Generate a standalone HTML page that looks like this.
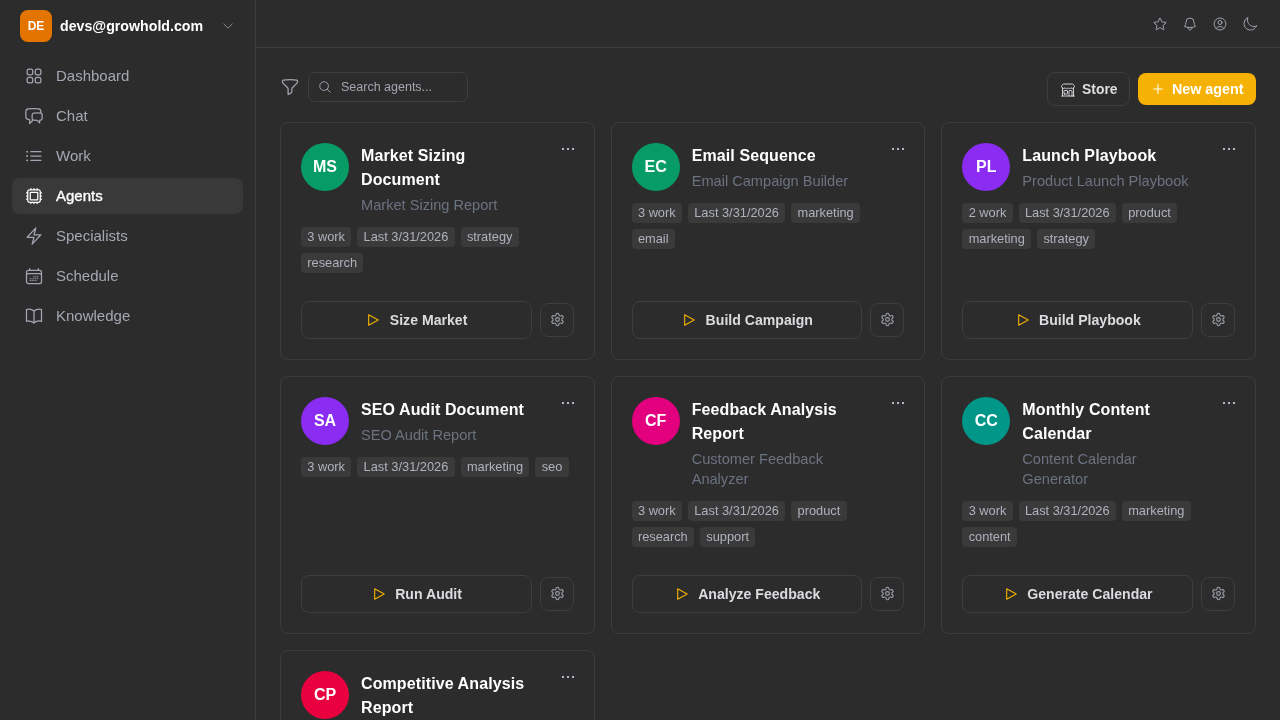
<!DOCTYPE html>
<html><head><meta charset="utf-8">
<style>
*{box-sizing:border-box;margin:0;padding:0}
body{will-change:transform}
html,body{width:1280px;height:720px;overflow:hidden;background:#2c2c2c;font-family:"Liberation Sans",sans-serif;color:#fff}
svg{display:block}
.sb{position:absolute;left:0;top:0;width:256px;height:720px;border-right:1px solid #3e3e3e;background:#2c2c2c}
.hdr{position:absolute;left:256px;top:0;right:0;height:48px;border-bottom:1px solid #3e3e3e}
.av{position:absolute;left:20px;top:10px;width:32px;height:32px;border-radius:8px;background:#e37400;font-weight:700;font-size:12px;line-height:32px;text-align:center;color:#fff}
.email{position:absolute;left:60px;top:16px;font-size:14.2px;font-weight:700;line-height:20px;color:#fff;white-space:nowrap}
.chev{position:absolute;left:221px;top:19px}
.item{position:absolute;left:12px;width:231px;height:36px;border-radius:8px;font-size:15px;line-height:36px;color:#a4a8b4}
.item svg{position:absolute;left:12px;top:8px}
.item span{position:absolute;left:44px;top:0}
.item.act{background:#393939;color:#fff;-webkit-text-stroke:0.35px #fff}
.hi{position:absolute;top:16px}
.filter{position:absolute;left:280px;top:77px}
.search{position:absolute;left:308px;top:72px;width:160px;height:30px;border:1px solid #3e3e3e;border-radius:7px}
.search svg{position:absolute;left:9px;top:7px}
.search span{position:absolute;left:32px;top:0;line-height:28px;font-size:12.5px;color:#a3a6b0}
.store{position:absolute;left:1047px;top:72px;width:83px;height:34px;border:1px solid #3e3e3e;border-radius:8px}
.store svg{position:absolute;left:12px;top:9px}
.store span{position:absolute;left:34px;top:0;line-height:32px;font-size:13.9px;font-weight:700;color:#dedee2}
.new{position:absolute;left:1138px;top:73px;width:118px;height:32px;border-radius:8px;background:#f5b204}
.new svg{position:absolute;left:13px;top:9px}
.new span{position:absolute;left:34px;top:0;line-height:32px;font-size:14.3px;font-weight:700;color:#fff}
.card{position:absolute;border:1px solid #3c3c3c;border-radius:8px;padding:20px}
.circ{position:absolute;left:20px;top:20px;width:48px;height:48px;border-radius:50%;font-size:16px;font-weight:700;line-height:48px;text-align:center;color:#fff}
.dots{position:absolute;left:279.5px;top:24px}
.body{margin-left:60px;min-height:48px;white-space:nowrap}
.ttl{font-size:16px;font-weight:700;line-height:24px;color:#fff;position:relative;top:0.7px;letter-spacing:0.1px}
.sub{margin-top:4px;font-size:14.6px;line-height:20px;color:#6b7280}
.tagsw{margin-top:12px;display:flex;flex-direction:column;gap:6px}
.tags{display:flex;gap:6px}
.tag{height:20px;line-height:20px;padding:0 6.3px;border-radius:4px;background:#3a3a3a;font-size:12.8px;color:#aeb2bd;white-space:nowrap}
.run{position:absolute;left:20px;bottom:20px;right:62px;height:38px;border:1px solid #3e3e3e;border-radius:8px}
.run .in{position:absolute;left:0;right:0;top:0;display:flex;justify-content:center;align-items:center;height:36px;gap:8.5px;font-size:14.1px;font-weight:700;color:#dcdce0}
.gear{position:absolute;right:20px;bottom:22px;width:34px;height:34px;border:1px solid #3e3e3e;border-radius:8px}
.gear svg{position:absolute;left:9px;top:8px}
</style></head><body>

<div class="sb">
  <div class="av">DE</div>
  <div class="email">devs@growhold.com</div>
  <svg class="chev" width="14" height="14" viewBox="0 0 24 24" fill="none" stroke="#8e9099" stroke-width="1.6" stroke-linecap="round" stroke-linejoin="round"><path d="m19.5 8.25-7.5 7.5-7.5-7.5"/></svg>

  <div class="item" style="top:58px"><svg width="20" height="20" viewBox="0 0 24 24" fill="none" stroke="#a3a6b0" stroke-width="1.5" stroke-linecap="round" stroke-linejoin="round"><path d="M3.75 6A2.25 2.25 0 0 1 6 3.75h2.25A2.25 2.25 0 0 1 10.5 6v2.25a2.25 2.25 0 0 1-2.25 2.25H6a2.25 2.25 0 0 1-2.25-2.25V6ZM3.75 15.75A2.25 2.25 0 0 1 6 13.5h2.25a2.25 2.25 0 0 1 2.25 2.25V18a2.25 2.25 0 0 1-2.25 2.25H6A2.25 2.25 0 0 1 3.75 18v-2.25ZM13.5 6a2.25 2.25 0 0 1 2.25-2.25H18A2.25 2.25 0 0 1 20.25 6v2.25A2.25 2.25 0 0 1 18 10.5h-2.25a2.25 2.25 0 0 1-2.25-2.25V6ZM13.5 15.75a2.25 2.25 0 0 1 2.25-2.25H18a2.25 2.25 0 0 1 2.25 2.25V18A2.25 2.25 0 0 1 18 20.25h-2.25A2.25 2.25 0 0 1 13.5 18v-2.25Z"/></svg><span>Dashboard</span></div>
  <div class="item" style="top:98px"><svg width="20" height="20" viewBox="0 0 24 24" fill="none" stroke="#a3a6b0" stroke-width="1.5" stroke-linecap="round" stroke-linejoin="round"><path d="M20.25 8.511c.884.284 1.5 1.128 1.5 2.097v4.286c0 1.136-.847 2.1-1.98 2.193-.34.027-.68.052-1.02.072v3.091l-3-3c-1.354 0-2.694-.055-4.020-.163a2.115 2.115 0 0 1-.825-.242m9.345-8.334a2.126 2.126 0 0 0-.476-.095 48.64 48.64 0 0 0-8.048 0c-1.131.094-1.976 1.057-1.976 2.192v4.286c0 .837.46 1.58 1.155 1.951m9.345-8.334V6.637c0-1.621-1.152-3.026-2.76-3.235A48.455 48.455 0 0 0 11.25 3c-2.115 0-4.198.137-6.24.402-1.608.209-2.760 1.614-2.760 3.235v6.226c0 1.621 1.152 3.026 2.760 3.235.577.075 1.157.14 1.74.194V21l4.155-4.155"/></svg><span>Chat</span></div>
  <div class="item" style="top:138px"><svg width="20" height="20" viewBox="0 0 24 24" fill="none" stroke="#a3a6b0" stroke-width="1.5" stroke-linecap="round" stroke-linejoin="round"><path d="M8.25 6.75h12M8.25 12h12m-12 5.25h12M3.75 6.75h.007v.008H3.75V6.75Zm.375 0a.375.375 0 1 1-.75 0 .375.375 0 0 1 .75 0ZM3.75 12h.007v.008H3.75V12Zm.375 0a.375.375 0 1 1-.75 0 .375.375 0 0 1 .75 0Zm-.375 5.25h.007v.008H3.75v-.008Zm.375 0a.375.375 0 1 1-.75 0 .375.375 0 0 1 .75 0Z"/></svg><span>Work</span></div>
  <div class="item act" style="top:178px"><svg width="20" height="20" viewBox="0 0 24 24" fill="none" stroke="#ffffff" stroke-width="1.5" stroke-linecap="round" stroke-linejoin="round"><path d="M8.25 3v1.5M4.5 8.25H3m18 0h-1.5M4.5 12H3m18 0h-1.5m-15 3.75H3m18 0h-1.5M8.25 19.5V21M12 3v1.5m0 15V21m3.75-18v1.5m0 15V21m-9-1.5h10.5a2.25 2.25 0 0 0 2.25-2.25V6.75a2.25 2.25 0 0 0-2.25-2.25H6.75A2.25 2.25 0 0 0 4.5 6.75v10.5a2.25 2.25 0 0 0 2.25 2.25Zm.75-12h9v9h-9v-9Z"/></svg><span>Agents</span></div>
  <div class="item" style="top:218px"><svg width="20" height="20" viewBox="0 0 24 24" fill="none" stroke="#a3a6b0" stroke-width="1.5" stroke-linecap="round" stroke-linejoin="round"><path d="m3.75 13.5 10.5-11.25L12 10.5h8.25L9.75 21.75 12 13.5H3.75Z"/></svg><span>Specialists</span></div>
  <div class="item" style="top:258px"><svg width="20" height="20" viewBox="0 0 24 24" fill="none" stroke="#a3a6b0" stroke-width="1.5" stroke-linecap="round" stroke-linejoin="round"><path d="M6.75 3v2.25M17.25 3v2.25M3 18.75V7.5a2.25 2.25 0 0 1 2.25-2.25h13.5A2.25 2.25 0 0 1 21 7.5v11.25m-18 0A2.25 2.25 0 0 0 5.25 21h13.5A2.25 2.25 0 0 0 21 18.75m-18 0v-7.5A2.25 2.25 0 0 1 5.25 9h13.5A2.25 2.25 0 0 1 21 11.25v7.5m-9-6h.008v.008H12v-.008ZM12 15h.008v.008H12V15Zm0 2.25h.008v.008H12v-.008ZM9.75 15h.008v.008H9.75V15Zm0 2.25h.008v.008H9.75v-.008ZM7.5 15h.008v.008H7.5V15Zm0 2.25h.008v.008H7.5v-.008Zm6.75-4.5h.008v.008h-.008v-.008Zm0 2.25h.008v.008h-.008V15Zm0 2.25h.008v.008h-.008v-.008Zm2.25-4.5h.008v.008H16.5v-.008Zm0 2.25h.008v.008H16.5V15Z"/></svg><span>Schedule</span></div>
  <div class="item" style="top:298px"><svg width="20" height="20" viewBox="0 0 24 24" fill="none" stroke="#a3a6b0" stroke-width="1.5" stroke-linecap="round" stroke-linejoin="round"><path d="M12 6.042A8.967 8.967 0 0 0 6 3.75c-1.052 0-2.062.18-3 .512v14.25A8.987 8.987 0 0 1 6 18c2.305 0 4.408.867 6 2.292m0-14.25a8.966 8.966 0 0 1 6-2.292c1.052 0 2.062.18 3 .512v14.25A8.987 8.987 0 0 0 18 18a8.967 8.967 0 0 0-6 2.292m0-14.25v14.25"/></svg><span>Knowledge</span></div>
</div>

<div class="hdr"></div>
<!-- header icons -->
<svg class="hi" style="left:1152px" width="16" height="16" viewBox="0 0 24 24" fill="none" stroke="#9da2ad" stroke-width="1.5" stroke-linecap="round" stroke-linejoin="round"><path d="M11.48 3.499a.562.562 0 0 1 1.04 0l2.125 5.111a.563.563 0 0 0 .475.345l5.518.442c.499.04.701.663.321.988l-4.204 3.602a.563.563 0 0 0-.182.557l1.285 5.385a.562.562 0 0 1-.84.61l-4.725-2.885a.562.562 0 0 0-.586 0L6.982 20.54a.562.562 0 0 1-.84-.61l1.285-5.386a.562.562 0 0 0-.182-.557l-4.204-3.602a.562.562 0 0 1 .321-.988l5.518-.442a.563.563 0 0 0 .475-.345L11.48 3.5Z"/></svg>
<svg class="hi" style="left:1182px" width="16" height="16" viewBox="0 0 24 24" fill="none" stroke="#9da2ad" stroke-width="1.5" stroke-linecap="round" stroke-linejoin="round"><path d="M14.857 17.082a23.848 23.848 0 0 0 5.454-1.31A8.967 8.967 0 0 1 18 9.75V9A6 6 0 0 0 6 9v.75a8.967 8.967 0 0 1-2.312 6.022c1.733.64 3.56 1.085 5.455 1.31m5.714 0a24.255 24.255 0 0 1-5.714 0m5.714 0a3 3 0 1 1-5.714 0"/></svg>
<svg class="hi" style="left:1212px" width="16" height="16" viewBox="0 0 24 24" fill="none" stroke="#9da2ad" stroke-width="1.5" stroke-linecap="round" stroke-linejoin="round"><path d="M17.982 18.725A7.488 7.488 0 0 0 12 15.75a7.488 7.488 0 0 0-5.982 2.975m11.963 0a9 9 0 1 0-11.963 0m11.963 0A8.966 8.966 0 0 1 12 21a8.966 8.966 0 0 1-5.982-2.275M15 9.75a3 3 0 1 1-6 0 3 3 0 0 1 6 0Z"/></svg>
<svg class="hi" style="left:1242px" width="16" height="16" viewBox="0 0 24 24" fill="none" stroke="#9da2ad" stroke-width="1.5" stroke-linecap="round" stroke-linejoin="round"><path d="M21.752 15.002A9.72 9.72 0 0 1 18 15.75c-5.385 0-9.75-4.365-9.75-9.75 0-1.33.266-2.597.748-3.752A9.753 9.753 0 0 0 3 11.25C3 16.635 7.365 21 12.75 21a9.753 9.753 0 0 0 9.002-5.998Z"/></svg>

<!-- toolbar -->
<svg class="filter" width="20" height="20" viewBox="0 0 24 24" fill="none" stroke="#a3a6b0" stroke-width="1.5" stroke-linecap="round" stroke-linejoin="round"><path d="M12 3c2.755 0 5.455.232 8.083.678.533.09.917.556.917 1.096v1.044a2.25 2.25 0 0 1-.659 1.591l-5.432 5.432a2.25 2.25 0 0 0-.659 1.591v2.927a2.25 2.25 0 0 1-1.244 2.013L9.75 21v-6.568a2.25 2.25 0 0 0-.659-1.591L3.659 7.409A2.25 2.250 0 0 1 3 5.818V4.774c0-.54.384-1.006.917-1.096A48.32 48.32 0 0 1 12 3Z"/></svg>
<div class="search"><svg width="14" height="14" viewBox="0 0 24 24" fill="none" stroke="#a3a6b0" stroke-width="1.6" stroke-linecap="round" stroke-linejoin="round"><path d="m21 21-5.197-5.197m0 0A7.5 7.5 0 1 0 5.196 5.196a7.5 7.5 0 0 0 10.607 10.607Z"/></svg><span>Search agents...</span></div>
<div class="store"><svg width="16" height="16" viewBox="0 0 24 24" fill="none" stroke="#cfd0d5" stroke-width="1.5" stroke-linecap="round" stroke-linejoin="round"><path d="M13.5 21v-7.5a.75.75 0 0 1 .75-.75h3a.75.75 0 0 1 .75.75V21m-4.5 0H2.36m11.14 0H18m0 0h3.64m-1.39 0V9.349M3.75 21V9.349m0 0a3.001 3.001 0 0 0 3.75-.615A2.993 2.993 0 0 0 9.75 9.750c.896 0 1.7-.393 2.25-1.016a2.993 2.993 0 0 0 2.25 1.016c.896 0 1.7-.393 2.25-1.016a3.001 3.001 0 0 0 3.75.614m-16.5 0a3.004 3.004 0 0 1-.621-4.72l1.189-1.19A1.5 1.5 0 0 1 5.378 3h13.243a1.5 1.5 0 0 1 1.06.44l1.19 1.189a3 3 0 0 1-.621 4.72M6.75 18h3.75a.75.75 0 0 0 .75-.75V13.5a.75.75 0 0 0-.75-.75H6.75a.75.75 0 0 0-.75.75v3.75c0 .414.336.75.75.75Z"/></svg><span>Store</span></div>
<div class="new"><svg width="14" height="14" viewBox="0 0 24 24" fill="none" stroke="#fff" stroke-width="1.8" stroke-linecap="round" stroke-linejoin="round"><path d="M12 4.5v15m7.5-7.5h-15"/></svg><span>New agent</span></div>

<!-- CARDS -->
<div class="card" style="left:280px;top:122px;width:314.67px;height:238px"><div class="circ" style="background:#079c66">MS</div><svg class="dots" width="14" height="4" viewBox="0 0 14 4"><rect x="1" y="1" width="2" height="2" fill="#b2b9c8"/><rect x="6" y="1" width="2" height="2" fill="#b2b9c8"/><rect x="11" y="1" width="2" height="2" fill="#b2b9c8"/></svg><div class="body"><div class="ttl">Market Sizing<br>Document</div><div class="sub">Market Sizing Report</div></div><div class="tagsw"><div class="tags"><span class="tag">3 work</span><span class="tag">Last 3/31/2026</span><span class="tag">strategy</span></div><div class="tags"><span class="tag">research</span></div></div><div class="run"><div class="in"><svg width="16" height="16" viewBox="0 0 24 24" fill="none" stroke="#f0b000" stroke-width="1.7" stroke-linecap="round" stroke-linejoin="round"><path d="M5.5 4.2L19.8 12L5.5 19.8Z"/></svg><span>Size Market</span></div></div><div class="gear"><svg width="15" height="15" viewBox="0 0 24 24" fill="none" stroke="#a0a4ae" stroke-width="1.7" stroke-linecap="round" stroke-linejoin="round"><path d="M12.22 2h-.44a2 2 0 0 0-2 2v.18a2 2 0 0 1-1 1.73l-.43.25a2 2 0 0 1-2 0l-.15-.08a2 2 0 0 0-2.73.73l-.22.38a2 2 0 0 0 .73 2.73l.15.1a2 2 0 0 1 1 1.72v.51a2 2 0 0 1-1 1.74l-.15.09a2 2 0 0 0-.73 2.73l.22.38a2 2 0 0 0 2.73.73l.15-.08a2 2 0 0 1 2 0l.43.25a2 2 0 0 1 1 1.73V20a2 2 0 0 0 2 2h.44a2 2 0 0 0 2-2v-.18a2 2 0 0 1 1-1.73l.43-.25a2 2 0 0 1 2 0l.15.08a2 2 0 0 0 2.73-.73l.22-.39a2 2 0 0 0-.73-2.73l-.15-.08a2 2 0 0 1-1-1.74v-.5a2 2 0 0 1 1-1.74l.15-.09a2 2 0 0 0 .73-2.73l-.22-.38a2 2 0 0 0-2.73-.73l-.15.08a2 2 0 0 1-2 0l-.43-.25a2 2 0 0 1-1-1.73V4a2 2 0 0 0-2-2z"/><circle cx="12" cy="12" r="3"/></svg></div></div>
<div class="card" style="left:610.67px;top:122px;width:314.67px;height:238px"><div class="circ" style="background:#079c66">EC</div><svg class="dots" width="14" height="4" viewBox="0 0 14 4"><rect x="1" y="1" width="2" height="2" fill="#b2b9c8"/><rect x="6" y="1" width="2" height="2" fill="#b2b9c8"/><rect x="11" y="1" width="2" height="2" fill="#b2b9c8"/></svg><div class="body"><div class="ttl">Email Sequence</div><div class="sub">Email Campaign Builder</div></div><div class="tagsw"><div class="tags"><span class="tag">3 work</span><span class="tag">Last 3/31/2026</span><span class="tag">marketing</span></div><div class="tags"><span class="tag">email</span></div></div><div class="run"><div class="in"><svg width="16" height="16" viewBox="0 0 24 24" fill="none" stroke="#f0b000" stroke-width="1.7" stroke-linecap="round" stroke-linejoin="round"><path d="M5.5 4.2L19.8 12L5.5 19.8Z"/></svg><span>Build Campaign</span></div></div><div class="gear"><svg width="15" height="15" viewBox="0 0 24 24" fill="none" stroke="#a0a4ae" stroke-width="1.7" stroke-linecap="round" stroke-linejoin="round"><path d="M12.22 2h-.44a2 2 0 0 0-2 2v.18a2 2 0 0 1-1 1.73l-.43.25a2 2 0 0 1-2 0l-.15-.08a2 2 0 0 0-2.73.73l-.22.38a2 2 0 0 0 .73 2.73l.15.1a2 2 0 0 1 1 1.72v.51a2 2 0 0 1-1 1.74l-.15.09a2 2 0 0 0-.73 2.73l.22.38a2 2 0 0 0 2.73.73l.15-.08a2 2 0 0 1 2 0l.43.25a2 2 0 0 1 1 1.73V20a2 2 0 0 0 2 2h.44a2 2 0 0 0 2-2v-.18a2 2 0 0 1 1-1.73l.43-.25a2 2 0 0 1 2 0l.15.08a2 2 0 0 0 2.73-.73l.22-.39a2 2 0 0 0-.73-2.73l-.15-.08a2 2 0 0 1-1-1.74v-.5a2 2 0 0 1 1-1.74l.15-.09a2 2 0 0 0 .73-2.73l-.22-.38a2 2 0 0 0-2.73-.73l-.15.08a2 2 0 0 1-2 0l-.43-.25a2 2 0 0 1-1-1.73V4a2 2 0 0 0-2-2z"/><circle cx="12" cy="12" r="3"/></svg></div></div>
<div class="card" style="left:941.33px;top:122px;width:314.67px;height:238px"><div class="circ" style="background:#8a2cf2">PL</div><svg class="dots" width="14" height="4" viewBox="0 0 14 4"><rect x="1" y="1" width="2" height="2" fill="#b2b9c8"/><rect x="6" y="1" width="2" height="2" fill="#b2b9c8"/><rect x="11" y="1" width="2" height="2" fill="#b2b9c8"/></svg><div class="body"><div class="ttl">Launch Playbook</div><div class="sub">Product Launch Playbook</div></div><div class="tagsw"><div class="tags"><span class="tag">2 work</span><span class="tag">Last 3/31/2026</span><span class="tag">product</span></div><div class="tags"><span class="tag">marketing</span><span class="tag">strategy</span></div></div><div class="run"><div class="in"><svg width="16" height="16" viewBox="0 0 24 24" fill="none" stroke="#f0b000" stroke-width="1.7" stroke-linecap="round" stroke-linejoin="round"><path d="M5.5 4.2L19.8 12L5.5 19.8Z"/></svg><span>Build Playbook</span></div></div><div class="gear"><svg width="15" height="15" viewBox="0 0 24 24" fill="none" stroke="#a0a4ae" stroke-width="1.7" stroke-linecap="round" stroke-linejoin="round"><path d="M12.22 2h-.44a2 2 0 0 0-2 2v.18a2 2 0 0 1-1 1.73l-.43.25a2 2 0 0 1-2 0l-.15-.08a2 2 0 0 0-2.73.73l-.22.38a2 2 0 0 0 .73 2.73l.15.1a2 2 0 0 1 1 1.72v.51a2 2 0 0 1-1 1.74l-.15.09a2 2 0 0 0-.73 2.73l.22.38a2 2 0 0 0 2.73.73l.15-.08a2 2 0 0 1 2 0l.43.25a2 2 0 0 1 1 1.73V20a2 2 0 0 0 2 2h.44a2 2 0 0 0 2-2v-.18a2 2 0 0 1 1-1.73l.43-.25a2 2 0 0 1 2 0l.15.08a2 2 0 0 0 2.73-.73l.22-.39a2 2 0 0 0-.73-2.73l-.15-.08a2 2 0 0 1-1-1.74v-.5a2 2 0 0 1 1-1.74l.15-.09a2 2 0 0 0 .73-2.73l-.22-.38a2 2 0 0 0-2.73-.73l-.15.08a2 2 0 0 1-2 0l-.43-.25a2 2 0 0 1-1-1.73V4a2 2 0 0 0-2-2z"/><circle cx="12" cy="12" r="3"/></svg></div></div>
<div class="card" style="left:280px;top:376px;width:314.67px;height:258px"><div class="circ" style="background:#8a2cf2">SA</div><svg class="dots" width="14" height="4" viewBox="0 0 14 4"><rect x="1" y="1" width="2" height="2" fill="#b2b9c8"/><rect x="6" y="1" width="2" height="2" fill="#b2b9c8"/><rect x="11" y="1" width="2" height="2" fill="#b2b9c8"/></svg><div class="body"><div class="ttl">SEO Audit Document</div><div class="sub">SEO Audit Report</div></div><div class="tagsw"><div class="tags"><span class="tag">3 work</span><span class="tag">Last 3/31/2026</span><span class="tag">marketing</span><span class="tag">seo</span></div></div><div class="run"><div class="in"><svg width="16" height="16" viewBox="0 0 24 24" fill="none" stroke="#f0b000" stroke-width="1.7" stroke-linecap="round" stroke-linejoin="round"><path d="M5.5 4.2L19.8 12L5.5 19.8Z"/></svg><span>Run Audit</span></div></div><div class="gear"><svg width="15" height="15" viewBox="0 0 24 24" fill="none" stroke="#a0a4ae" stroke-width="1.7" stroke-linecap="round" stroke-linejoin="round"><path d="M12.22 2h-.44a2 2 0 0 0-2 2v.18a2 2 0 0 1-1 1.73l-.43.25a2 2 0 0 1-2 0l-.15-.08a2 2 0 0 0-2.73.73l-.22.38a2 2 0 0 0 .73 2.73l.15.1a2 2 0 0 1 1 1.72v.51a2 2 0 0 1-1 1.74l-.15.09a2 2 0 0 0-.73 2.73l.22.38a2 2 0 0 0 2.73.73l.15-.08a2 2 0 0 1 2 0l.43.25a2 2 0 0 1 1 1.73V20a2 2 0 0 0 2 2h.44a2 2 0 0 0 2-2v-.18a2 2 0 0 1 1-1.73l.43-.25a2 2 0 0 1 2 0l.15.08a2 2 0 0 0 2.73-.73l.22-.39a2 2 0 0 0-.73-2.73l-.15-.08a2 2 0 0 1-1-1.74v-.5a2 2 0 0 1 1-1.74l.15-.09a2 2 0 0 0 .73-2.73l-.22-.38a2 2 0 0 0-2.73-.73l-.15.08a2 2 0 0 1-2 0l-.43-.25a2 2 0 0 1-1-1.73V4a2 2 0 0 0-2-2z"/><circle cx="12" cy="12" r="3"/></svg></div></div>
<div class="card" style="left:610.67px;top:376px;width:314.67px;height:258px"><div class="circ" style="background:#e2007f">CF</div><svg class="dots" width="14" height="4" viewBox="0 0 14 4"><rect x="1" y="1" width="2" height="2" fill="#b2b9c8"/><rect x="6" y="1" width="2" height="2" fill="#b2b9c8"/><rect x="11" y="1" width="2" height="2" fill="#b2b9c8"/></svg><div class="body"><div class="ttl">Feedback Analysis<br>Report</div><div class="sub">Customer Feedback<br>Analyzer</div></div><div class="tagsw"><div class="tags"><span class="tag">3 work</span><span class="tag">Last 3/31/2026</span><span class="tag">product</span></div><div class="tags"><span class="tag">research</span><span class="tag">support</span></div></div><div class="run"><div class="in"><svg width="16" height="16" viewBox="0 0 24 24" fill="none" stroke="#f0b000" stroke-width="1.7" stroke-linecap="round" stroke-linejoin="round"><path d="M5.5 4.2L19.8 12L5.5 19.8Z"/></svg><span>Analyze Feedback</span></div></div><div class="gear"><svg width="15" height="15" viewBox="0 0 24 24" fill="none" stroke="#a0a4ae" stroke-width="1.7" stroke-linecap="round" stroke-linejoin="round"><path d="M12.22 2h-.44a2 2 0 0 0-2 2v.18a2 2 0 0 1-1 1.73l-.43.25a2 2 0 0 1-2 0l-.15-.08a2 2 0 0 0-2.73.73l-.22.38a2 2 0 0 0 .73 2.73l.15.1a2 2 0 0 1 1 1.72v.51a2 2 0 0 1-1 1.74l-.15.09a2 2 0 0 0-.73 2.73l.22.38a2 2 0 0 0 2.73.73l.15-.08a2 2 0 0 1 2 0l.43.25a2 2 0 0 1 1 1.73V20a2 2 0 0 0 2 2h.44a2 2 0 0 0 2-2v-.18a2 2 0 0 1 1-1.73l.43-.25a2 2 0 0 1 2 0l.15.08a2 2 0 0 0 2.73-.73l.22-.39a2 2 0 0 0-.73-2.73l-.15-.08a2 2 0 0 1-1-1.74v-.5a2 2 0 0 1 1-1.74l.15-.09a2 2 0 0 0 .73-2.73l-.22-.38a2 2 0 0 0-2.73-.73l-.15.08a2 2 0 0 1-2 0l-.43-.25a2 2 0 0 1-1-1.73V4a2 2 0 0 0-2-2z"/><circle cx="12" cy="12" r="3"/></svg></div></div>
<div class="card" style="left:941.33px;top:376px;width:314.67px;height:258px"><div class="circ" style="background:#009688">CC</div><svg class="dots" width="14" height="4" viewBox="0 0 14 4"><rect x="1" y="1" width="2" height="2" fill="#b2b9c8"/><rect x="6" y="1" width="2" height="2" fill="#b2b9c8"/><rect x="11" y="1" width="2" height="2" fill="#b2b9c8"/></svg><div class="body"><div class="ttl">Monthly Content<br>Calendar</div><div class="sub">Content Calendar<br>Generator</div></div><div class="tagsw"><div class="tags"><span class="tag">3 work</span><span class="tag">Last 3/31/2026</span><span class="tag">marketing</span></div><div class="tags"><span class="tag">content</span></div></div><div class="run"><div class="in"><svg width="16" height="16" viewBox="0 0 24 24" fill="none" stroke="#f0b000" stroke-width="1.7" stroke-linecap="round" stroke-linejoin="round"><path d="M5.5 4.2L19.8 12L5.5 19.8Z"/></svg><span>Generate Calendar</span></div></div><div class="gear"><svg width="15" height="15" viewBox="0 0 24 24" fill="none" stroke="#a0a4ae" stroke-width="1.7" stroke-linecap="round" stroke-linejoin="round"><path d="M12.22 2h-.44a2 2 0 0 0-2 2v.18a2 2 0 0 1-1 1.73l-.43.25a2 2 0 0 1-2 0l-.15-.08a2 2 0 0 0-2.73.73l-.22.38a2 2 0 0 0 .73 2.73l.15.1a2 2 0 0 1 1 1.72v.51a2 2 0 0 1-1 1.74l-.15.09a2 2 0 0 0-.73 2.73l.22.38a2 2 0 0 0 2.73.73l.15-.08a2 2 0 0 1 2 0l.43.25a2 2 0 0 1 1 1.73V20a2 2 0 0 0 2 2h.44a2 2 0 0 0 2-2v-.18a2 2 0 0 1 1-1.73l.43-.25a2 2 0 0 1 2 0l.15.08a2 2 0 0 0 2.73-.73l.22-.39a2 2 0 0 0-.73-2.73l-.15-.08a2 2 0 0 1-1-1.74v-.5a2 2 0 0 1 1-1.74l.15-.09a2 2 0 0 0 .73-2.73l-.22-.38a2 2 0 0 0-2.73-.73l-.15.08a2 2 0 0 1-2 0l-.43-.25a2 2 0 0 1-1-1.73V4a2 2 0 0 0-2-2z"/><circle cx="12" cy="12" r="3"/></svg></div></div>
<div class="card" style="left:280px;top:650px;width:314.67px;height:258px"><div class="circ" style="background:#e8003f">CP</div><svg class="dots" width="14" height="4" viewBox="0 0 14 4"><rect x="1" y="1" width="2" height="2" fill="#b2b9c8"/><rect x="6" y="1" width="2" height="2" fill="#b2b9c8"/><rect x="11" y="1" width="2" height="2" fill="#b2b9c8"/></svg><div class="body"><div class="ttl">Competitive Analysis<br>Report</div><div class="sub">Competitive Analysis</div></div><div class="tagsw"><div class="tags"><span class="tag">3 work</span></div></div><div class="run"><div class="in"><svg width="16" height="16" viewBox="0 0 24 24" fill="none" stroke="#f0b000" stroke-width="1.7" stroke-linecap="round" stroke-linejoin="round"><path d="M5.5 4.2L19.8 12L5.5 19.8Z"/></svg><span>Analyze</span></div></div><div class="gear"><svg width="15" height="15" viewBox="0 0 24 24" fill="none" stroke="#a0a4ae" stroke-width="1.7" stroke-linecap="round" stroke-linejoin="round"><path d="M12.22 2h-.44a2 2 0 0 0-2 2v.18a2 2 0 0 1-1 1.73l-.43.25a2 2 0 0 1-2 0l-.15-.08a2 2 0 0 0-2.73.73l-.22.38a2 2 0 0 0 .73 2.73l.15.1a2 2 0 0 1 1 1.72v.51a2 2 0 0 1-1 1.74l-.15.09a2 2 0 0 0-.73 2.73l.22.38a2 2 0 0 0 2.73.73l.15-.08a2 2 0 0 1 2 0l.43.25a2 2 0 0 1 1 1.73V20a2 2 0 0 0 2 2h.44a2 2 0 0 0 2-2v-.18a2 2 0 0 1 1-1.73l.43-.25a2 2 0 0 1 2 0l.15.08a2 2 0 0 0 2.73-.73l.22-.39a2 2 0 0 0-.73-2.73l-.15-.08a2 2 0 0 1-1-1.74v-.5a2 2 0 0 1 1-1.74l.15-.09a2 2 0 0 0 .73-2.73l-.22-.38a2 2 0 0 0-2.73-.73l-.15.08a2 2 0 0 1-2 0l-.43-.25a2 2 0 0 1-1-1.73V4a2 2 0 0 0-2-2z"/><circle cx="12" cy="12" r="3"/></svg></div></div>
</body></html>
